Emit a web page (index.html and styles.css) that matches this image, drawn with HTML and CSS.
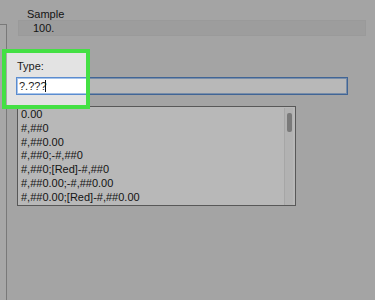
FILE: index.html
```html
<!DOCTYPE html>
<html>
<head>
<meta charset="utf-8">
<link rel="stylesheet" href="styles.css">
</head>
<body>
<div class="screen">
  <div class="sidebar"></div>
  <div class="main">
    <div class="sample-label">Sample</div>
    <div class="sample-box">100.</div>
    <div class="type-label">Type:</div>
    <div class="type-input">?.???<span class="caret"></span></div>
    <div class="list">
      <ul class="items">
        <li>0.00</li>
        <li>#,##0</li>
        <li>#,##0.00</li>
        <li>#,##0;-#,##0</li>
        <li>#,##0;[Red]-#,##0</li>
        <li>#,##0.00;-#,##0.00</li>
        <li>#,##0.00;[Red]-#,##0.00</li>
      </ul>
      <div class="scrollbar"><div class="thumb"></div></div>
    </div>
  </div>
  <div class="highlight"></div>
</div>
</body>
</html>
```
FILE: styles.css
```css
html, body {
  margin: 0;
  padding: 0;
}
body {
  width: 375px;
  height: 300px;
  overflow: hidden;
  background: #e3e3e3;
  font-family: "Liberation Sans", Arial, sans-serif;
  font-size: 11px;
  color: #1c1c1c;
}
.screen {
  position: relative;
  display: grid;
  grid-template-columns: 7px 1fr;
  height: 300px;
  overflow: hidden;
}
.sidebar {
  margin-top: 24px;
  border-top: 1px solid #a8a8a8;
  border-right: 1px solid #a8a8a8;
  background: #e8e8e8;
}
.main {
  display: flex;
  flex-direction: column;
  align-items: flex-start;
  padding-top: 8px;
}
.sample-label {
  margin-left: 20px;
  line-height: 12px;
}
.sample-box {
  box-sizing: border-box;
  margin-left: 11px;
  width: 348px;
  height: 16px;
  border: 1px solid #d6d6d6;
  background: #dadada;
  padding-left: 14px;
  line-height: 15px;
}
.type-label {
  margin-left: 10px;
  margin-top: 24px;
  line-height: 12px;
}
.type-input {
  box-sizing: border-box;
  margin-left: 9px;
  margin-top: 5px;
  width: 332px;
  height: 18px;
  border: 1px solid #5b8ccf;
  box-shadow: inset 0 0 0 1px #a7c4ea;
  background: #ffffff;
  padding-left: 2px;
  line-height: 16px;
  display: flex;
  align-items: center;
}
.caret {
  display: inline-block;
  width: 1px;
  height: 12px;
  margin-left: -2px;
  background: #111;
}
.list {
  box-sizing: border-box;
  margin-left: 10px;
  margin-top: 11px;
  width: 279px;
  height: 100px;
  border: 1px solid #7a7a7a;
  background: #ffffff;
  display: flex;
}
.items {
  list-style: none;
  margin: 0;
  padding: 1px 0 0 3px;
  flex: 1;
  line-height: 13.8px;
}
.scrollbar {
  width: 9px;
  margin-right: 2px;
  margin-top: 1px;
  background: #f7f7f7;
  border-left: 1px solid #e6e6e6;
  box-sizing: border-box;
  padding: 5px 1px 0 2px;
}
.thumb {
  width: 5px;
  height: 19px;
  border-radius: 2px;
  background: #a9a9a9;
}
.highlight {
  position: absolute;
  left: 2px;
  top: 49px;
  width: 88px;
  height: 60px;
  box-sizing: border-box;
  border: 4px solid #44e044;
  box-shadow: 0 0 0 2000px rgba(0, 0, 0, 0.28);
}
```
